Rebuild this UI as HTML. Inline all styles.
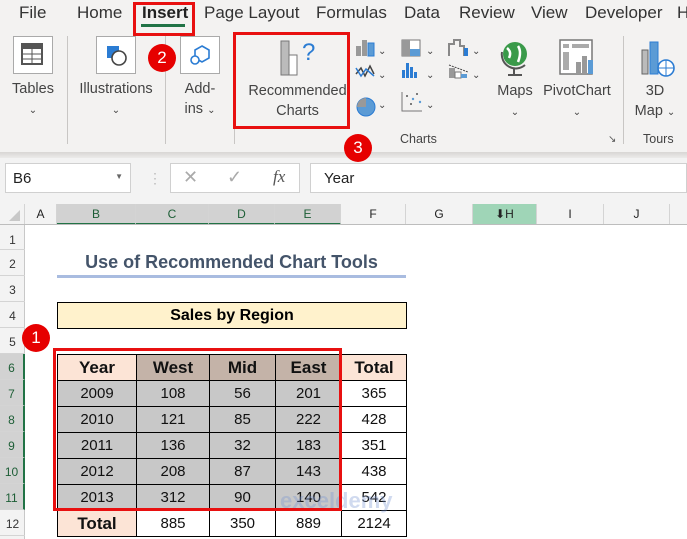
<!DOCTYPE html>
<html><head><meta charset="utf-8"><style>
*{margin:0;padding:0;box-sizing:border-box}
body{width:687px;height:539px;overflow:hidden;background:#fff;font-family:"Liberation Sans",Arial,sans-serif;position:relative}
.a{position:absolute}
.tab{position:absolute;top:3px;font-size:17px;color:#333}
.lbl{position:absolute;font-size:14.5px;color:#444;text-align:center;line-height:20px}
.chev{font-size:10px}
.sep{position:absolute;width:1px;background:#c8c6c4}
.ch{position:absolute;top:204px;height:21px;font-size:12px;color:#222;text-align:center;line-height:21px;border-right:1px solid #d4d4d4}
.rh{position:absolute;left:0;width:25px;font-size:12px;color:#333;text-align:center;border-bottom:1px solid #d4d4d4}
.c{position:absolute;font-size:15px;text-align:center;line-height:25px;border:1px solid #000;color:#111}
.red{position:absolute;border:3px solid #e81010}
.dot{position:absolute;width:28px;height:28px;border-radius:50%;background:#e60000;color:#fff;font-size:17px;text-align:center;line-height:28px}
</style></head><body>
<!-- ribbon -->
<div class="a" style="left:0;top:0;width:687px;height:152px;background:#f3f2f1"></div>
<div class="a" style="left:0;top:152px;width:687px;height:6px;background:linear-gradient(#d8d6d4,#ecebea)"></div>
<div class="tab" style="left:19px">File</div>
<div class="tab" style="left:77px">Home</div>
<div class="tab" style="left:142px;font-weight:bold;color:#222">Insert</div>
<div class="a" style="left:141px;top:24px;width:44px;height:3px;background:#217346"></div>
<div class="tab" style="left:204px">Page Layout</div>
<div class="tab" style="left:316px">Formulas</div>
<div class="tab" style="left:404px">Data</div>
<div class="tab" style="left:459px">Review</div>
<div class="tab" style="left:531px">View</div>
<div class="tab" style="left:585px">Developer</div>
<div class="tab" style="left:677px">H</div>

<!-- Tables -->
<div class="a" style="left:13px;top:36px;width:40px;height:38px;border:1px solid #aaa;background:#fff"></div>
<svg class="a" style="left:21px;top:43px" width="24" height="24"><rect x="1" y="1" width="20" height="20" fill="#fff" stroke="#555" stroke-width="2"/><rect x="2" y="2" width="18" height="4" fill="#555"/><line x1="2" y1="11" x2="20" y2="11" stroke="#555"/><line x1="2" y1="16" x2="20" y2="16" stroke="#555"/><line x1="11" y1="6" x2="11" y2="21" stroke="#555"/></svg>
<div class="lbl" style="left:5px;top:79px;width:56px">Tables<br><span class="chev">⌄</span></div>
<div class="sep" style="left:67px;top:36px;height:108px"></div>
<!-- Illustrations -->
<div class="a" style="left:96px;top:36px;width:40px;height:38px;border:1px solid #aaa;background:#fff"></div>
<svg class="a" style="left:104px;top:43px" width="26" height="26"><rect x="3" y="3" width="12" height="12" fill="#2b7cd3"/><circle cx="15" cy="15" r="7" fill="#fff" stroke="#444" stroke-width="1.6"/></svg>
<div class="lbl" style="left:74px;top:79px;width:84px">Illustrations<br><span class="chev">⌄</span></div>
<div class="sep" style="left:165px;top:36px;height:108px"></div>
<!-- Add-ins -->
<div class="a" style="left:180px;top:36px;width:40px;height:38px;border:1px solid #aaa;background:#fff"></div>
<svg class="a" style="left:188px;top:43px" width="26" height="26"><polygon points="14,3 21,7 21,15 14,19 7,15 7,7" fill="none" stroke="#2b7cd3" stroke-width="1.6"/><circle cx="7" cy="17" r="4" fill="#fff" stroke="#2b7cd3" stroke-width="1.6"/></svg>
<div class="lbl" style="left:176px;top:79px;width:48px">Add-<br>ins <span class="chev">⌄</span></div>
<div class="sep" style="left:234px;top:36px;height:108px"></div>
<!-- Recommended -->
<svg class="a" style="left:278px;top:38px" width="42" height="40"><rect x="3" y="3" width="8" height="34" fill="#bbb" stroke="#777"/><rect x="11" y="17" width="8" height="20" fill="#fff" stroke="#777"/><text x="24" y="22" font-size="24" fill="#2b7cd3" font-family="Liberation Sans">?</text></svg>
<div class="lbl" style="left:240px;top:81px;width:115px">Recommended<br>Charts</div>
<!-- chart small icons -->
<svg class="a" style="left:354px;top:36px" width="160" height="90">
<g fill="#999"><rect x="2" y="10" width="5" height="10"/><rect x="8" y="4" width="5" height="16"/></g><rect x="14" y="7" width="6" height="13" fill="#5b9bd5" stroke="#2b7cd3"/>
<path d="M2 38 L7 32 L11 40 L16 30 L20 38" fill="none" stroke="#444" stroke-width="1.5"/><path d="M2 32 L7 40 L12 33 L20 40" fill="none" stroke="#2b7cd3" stroke-width="1.5"/>
<circle cx="12" cy="71" r="9" fill="#5b9bd5" stroke="#2b7cd3"/><path d="M12 71 L12 62 A9 9 0 0 0 3 71 Z" fill="#999"/>
<text x="24" y="18" font-size="10" fill="#444">⌄</text><text x="24" y="42" font-size="10" fill="#444">⌄</text><text x="24" y="72" font-size="10" fill="#444">⌄</text>
<rect x="48" y="4" width="18" height="16" fill="#fff" stroke="#777"/><rect x="48" y="4" width="8" height="16" fill="#999"/><rect x="56" y="13" width="10" height="7" fill="#5b9bd5"/>
<g fill="#2b7cd3"><rect x="48" y="34" width="3" height="8"/><rect x="52" y="27" width="3" height="15"/><rect x="56" y="31" width="3" height="11"/><rect x="60" y="36" width="3" height="6"/></g>
<g fill="#555"><circle cx="53" cy="60" r="1"/><circle cx="63" cy="58" r="1"/><circle cx="57" cy="68" r="1"/></g><g fill="#5b9bd5"><circle cx="59" cy="63" r="1.2"/><circle cx="66" cy="66" r="1.2"/></g><path d="M48 56 V75 H68" fill="none" stroke="#777"/>
<text x="72" y="18" font-size="10" fill="#444">⌄</text><text x="72" y="42" font-size="10" fill="#444">⌄</text><text x="72" y="72" font-size="10" fill="#444">⌄</text>
<path d="M95 20 V8 H100 V4 H106 V10 H110 V20" fill="none" stroke="#888" stroke-width="2"/><rect x="110" y="12" width="4" height="8" fill="#2b7cd3"/>
<rect x="95" y="32" width="6" height="10" fill="#999"/><rect x="101" y="36" width="6" height="6" fill="#fff" stroke="#777"/><rect x="107" y="38" width="6" height="4" fill="#5b9bd5"/><path d="M95 29 L114 36" stroke="#444" stroke-dasharray="2 1"/>
<text x="118" y="18" font-size="10" fill="#444">⌄</text><text x="118" y="42" font-size="10" fill="#444">⌄</text>
</svg>
<!-- Maps -->
<svg class="a" style="left:498px;top:38px" width="36" height="40"><circle cx="17" cy="16" r="12" fill="#3a9a4a"/><path d="M9 10 Q14 14 11 20 M20 8 Q24 14 20 24" stroke="#fff" stroke-width="2.5" fill="none"/><path d="M4 14 A14 14 0 0 0 27 27" fill="none" stroke="#555" stroke-width="2"/><path d="M16 31 V36 M10 37 H24" stroke="#555" stroke-width="2"/></svg>
<div class="lbl" style="left:492px;top:81px;width:46px">Maps<br><span class="chev">⌄</span></div>
<!-- PivotChart -->
<svg class="a" style="left:558px;top:38px" width="40" height="40"><rect x="2" y="2" width="32" height="34" fill="#fff" stroke="#777" stroke-width="1.5"/><rect x="5" y="6" width="6" height="4" fill="#aaa"/><rect x="14" y="6" width="17" height="4" fill="#aaa"/><rect x="5" y="14" width="6" height="18" fill="#aaa"/><rect x="18" y="24" width="5" height="12" fill="#999"/><rect x="24" y="18" width="5" height="18" fill="#999"/><rect x="30" y="22" width="5" height="14" fill="#5b9bd5"/></svg>
<div class="lbl" style="left:540px;top:81px;width:74px">PivotChart<br><span class="chev">⌄</span></div>
<div class="sep" style="left:623px;top:36px;height:108px"></div>
<!-- 3D Map -->
<svg class="a" style="left:640px;top:40px" width="40" height="40"><rect x="2" y="10" width="6" height="24" fill="#bbb" stroke="#666"/><rect x="10" y="2" width="8" height="32" fill="#5b9bd5" stroke="#2b7cd3"/><circle cx="26" cy="28" r="8" fill="#fff" stroke="#2b7cd3" stroke-width="1.6"/><path d="M18 28 H34 M26 20 V36" stroke="#2b7cd3"/></svg>
<div class="lbl" style="left:630px;top:81px;width:50px">3D<br>Map <span class="chev">⌄</span></div>
<div class="a" style="left:400px;top:132px;font-size:12.5px;color:#444">Charts</div>
<div class="a" style="left:608px;top:134px;font-size:10px;color:#555">↘</div>
<div class="a" style="left:643px;top:132px;font-size:12.5px;color:#444">Tours</div>

<!-- formula bar -->
<div class="a" style="left:0;top:158px;width:687px;height:66px;background:#f3f3f3"></div>
<div class="a" style="left:5px;top:163px;width:126px;height:30px;background:#fff;border:1px solid #d0d0d0;font-size:15px;padding:6px 0 0 7px;color:#222">B6<span style="position:absolute;right:7px;top:8px;font-size:8px;color:#666">▼</span></div>
<div class="a" style="left:148px;top:170px;color:#bbb;font-size:14px">⋮</div>
<div class="a" style="left:170px;top:163px;width:130px;height:30px;background:#fff;border:1px solid #d0d0d0"></div>
<div class="a" style="left:183px;top:167px;font-size:18px;color:#aaa">✕</div>
<div class="a" style="left:227px;top:167px;font-size:18px;color:#aaa">✓</div>
<div class="a" style="left:273px;top:167px;font-size:17px;color:#555;font-style:italic;font-family:'Liberation Serif',serif">fx</div>
<div class="a" style="left:310px;top:163px;width:377px;height:30px;background:#fff;border:1px solid #d0d0d0;font-size:15px;padding:6px 0 0 13px;color:#222">Year</div>

<!-- column headers -->
<div class="a" style="left:0;top:204px;width:25px;height:21px;border-right:1px solid #d4d4d4"><svg width="25" height="21"><polygon points="20,6 20,17 9,17" fill="#c8c8c8"/></svg></div>
<div class="ch" style="left:25px;width:32px">A</div>
<div class="ch" style="left:57px;width:79px;background:#d2d2d2;color:#1d5e36;border-bottom:2px solid #217346">B</div>
<div class="ch" style="left:136px;width:73px;background:#d2d2d2;color:#1d5e36;border-bottom:2px solid #217346">C</div>
<div class="ch" style="left:209px;width:66px;background:#d2d2d2;color:#1d5e36;border-bottom:2px solid #217346">D</div>
<div class="ch" style="left:275px;width:66px;background:#d2d2d2;color:#1d5e36;border-bottom:2px solid #217346">E</div>
<div class="ch" style="left:341px;width:65px">F</div>
<div class="ch" style="left:406px;width:67px">G</div>
<div class="ch" style="left:473px;width:64px;background:#9fd5b7">⬇H</div>
<div class="ch" style="left:537px;width:67px">I</div>
<div class="ch" style="left:604px;width:66px">J</div>
<div class="a" style="left:0;top:224px;width:687px;height:1px;background:#bdbdbd"></div>

<!-- row headers -->
<div class="a" style="left:0;top:225px;width:25px;height:314px;background:#f3f3f3;border-right:1px solid #c8c8c8"></div>
<div class="rh" style="top:225px;height:25px;line-height:30px">1</div>
<div class="rh" style="top:250px;height:26px;line-height:28px">2</div>
<div class="rh" style="top:276px;height:26px;line-height:28px">3</div>
<div class="rh" style="top:302px;height:26px;line-height:28px">4</div>
<div class="rh" style="top:328px;height:26px;line-height:28px">5</div>
<div class="rh" style="top:354px;height:26px;line-height:28px;background:#d2d2d2;color:#1d5e36;border-right:2px solid #217346">6</div>
<div class="rh" style="top:380px;height:26px;line-height:28px;background:#d2d2d2;color:#1d5e36;border-right:2px solid #217346">7</div>
<div class="rh" style="top:406px;height:26px;line-height:28px;background:#d2d2d2;color:#1d5e36;border-right:2px solid #217346">8</div>
<div class="rh" style="top:432px;height:26px;line-height:28px;background:#d2d2d2;color:#1d5e36;border-right:2px solid #217346">9</div>
<div class="rh" style="top:458px;height:26px;line-height:28px;background:#d2d2d2;color:#1d5e36;border-right:2px solid #217346">10</div>
<div class="rh" style="top:484px;height:26px;line-height:28px;background:#d2d2d2;color:#1d5e36;border-right:2px solid #217346">11</div>
<div class="rh" style="top:510px;height:26px;line-height:28px">12</div>

<!-- title -->
<div class="a" style="left:57px;top:252px;width:349px;text-align:center;font-size:18px;font-weight:bold;color:#44546a">Use of Recommended Chart Tools</div>
<div class="a" style="left:57px;top:275px;width:349px;height:3px;background:#a9bce0"></div>
<div class="a" style="left:57px;top:302px;width:350px;height:27px;background:#fff2cc;border:1px solid #000;text-align:center;font-size:16px;font-weight:bold;line-height:25px">Sales by Region</div>

<!-- table -->
<div class="c" style="left:57px;top:354px;width:80px;height:27px;background:#fce4d6;font-weight:bold;font-size:17px">Year</div>
<div class="c" style="left:136px;top:354px;width:74px;height:27px;background:#c4b3a8;font-weight:bold;font-size:17px">West</div>
<div class="c" style="left:209px;top:354px;width:67px;height:27px;background:#c4b3a8;font-weight:bold;font-size:17px">Mid</div>
<div class="c" style="left:275px;top:354px;width:67px;height:27px;background:#c4b3a8;font-weight:bold;font-size:17px">East</div>
<div class="c" style="left:341px;top:354px;width:66px;height:27px;background:#fce4d6;font-weight:bold;font-size:17px">Total</div>

<div class="c" style="left:57px;top:380px;width:80px;height:27px;background:#c8c8c8">2009</div><div class="c" style="left:136px;top:380px;width:74px;height:27px;background:#c8c8c8">108</div><div class="c" style="left:209px;top:380px;width:67px;height:27px;background:#c8c8c8">56</div><div class="c" style="left:275px;top:380px;width:67px;height:27px;background:#c8c8c8">201</div><div class="c" style="left:341px;top:380px;width:66px;height:27px">365</div>
<div class="c" style="left:57px;top:406px;width:80px;height:27px;background:#c8c8c8">2010</div><div class="c" style="left:136px;top:406px;width:74px;height:27px;background:#c8c8c8">121</div><div class="c" style="left:209px;top:406px;width:67px;height:27px;background:#c8c8c8">85</div><div class="c" style="left:275px;top:406px;width:67px;height:27px;background:#c8c8c8">222</div><div class="c" style="left:341px;top:406px;width:66px;height:27px">428</div>
<div class="c" style="left:57px;top:432px;width:80px;height:27px;background:#c8c8c8">2011</div><div class="c" style="left:136px;top:432px;width:74px;height:27px;background:#c8c8c8">136</div><div class="c" style="left:209px;top:432px;width:67px;height:27px;background:#c8c8c8">32</div><div class="c" style="left:275px;top:432px;width:67px;height:27px;background:#c8c8c8">183</div><div class="c" style="left:341px;top:432px;width:66px;height:27px">351</div>
<div class="c" style="left:57px;top:458px;width:80px;height:27px;background:#c8c8c8">2012</div><div class="c" style="left:136px;top:458px;width:74px;height:27px;background:#c8c8c8">208</div><div class="c" style="left:209px;top:458px;width:67px;height:27px;background:#c8c8c8">87</div><div class="c" style="left:275px;top:458px;width:67px;height:27px;background:#c8c8c8">143</div><div class="c" style="left:341px;top:458px;width:66px;height:27px">438</div>
<div class="c" style="left:57px;top:484px;width:80px;height:27px;background:#c8c8c8">2013</div><div class="c" style="left:136px;top:484px;width:74px;height:27px;background:#c8c8c8">312</div><div class="c" style="left:209px;top:484px;width:67px;height:27px;background:#c8c8c8">90</div><div class="c" style="left:275px;top:484px;width:67px;height:27px;background:#c8c8c8">140</div><div class="c" style="left:341px;top:484px;width:66px;height:27px">542</div>
<div class="c" style="left:57px;top:510px;width:80px;height:27px;background:#fce4d6;font-weight:bold;font-size:17px">Total</div><div class="c" style="left:136px;top:510px;width:74px;height:27px">885</div><div class="c" style="left:209px;top:510px;width:67px;height:27px">350</div><div class="c" style="left:275px;top:510px;width:67px;height:27px">889</div><div class="c" style="left:341px;top:510px;width:66px;height:27px">2124</div>
<div class="a" style="left:280px;top:488px;font-size:22px;font-weight:bold;color:rgba(120,150,210,0.35)">exceldemy</div>

<!-- red annotations -->
<div class="red" style="left:133px;top:2px;width:62px;height:34px"></div>
<div class="red" style="left:233px;top:32px;width:117px;height:97px"></div>
<div class="red" style="left:53px;top:348px;width:289px;height:163px"></div>
<div class="dot" style="left:148px;top:44px">2</div>
<div class="dot" style="left:344px;top:134px">3</div>
<div class="dot" style="left:22px;top:324px">1</div>
</body></html>
